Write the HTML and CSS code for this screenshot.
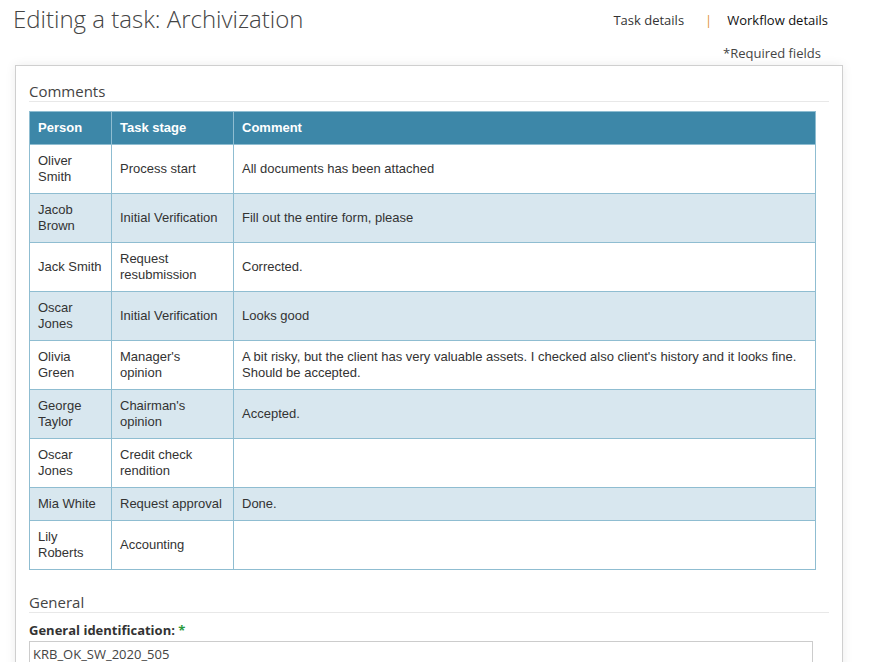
FILE: index.html
```html
<!DOCTYPE html>
<html>
<head>
<meta charset="utf-8">
<link rel="stylesheet" href="styles.css">
</head>
<body>
<header class="top">
  <h1 class="title">Editing a task: Archivization</h1>
  <nav class="tabs">
    <a class="tab">Task details</a>
    <span class="sep">|</span>
    <a class="tab active">Workflow details</a>
  </nav>
</header>
<div class="required">*Required fields</div>
<main class="panel">
  <section class="section">
    <h2 class="section-title">Comments</h2>
    <table class="grid">
      <colgroup>
        <col class="c1"><col class="c2"><col>
      </colgroup>
      <thead>
        <tr><th>Person</th><th>Task stage</th><th>Comment</th></tr>
      </thead>
      <tbody>
        <tr><td>Oliver Smith</td><td>Process start</td><td>All documents has been attached</td></tr>
        <tr><td>Jacob Brown</td><td>Initial Verification</td><td>Fill out the entire form, please</td></tr>
        <tr><td>Jack Smith</td><td>Request resubmission</td><td>Corrected.</td></tr>
        <tr><td>Oscar Jones</td><td>Initial Verification</td><td>Looks good</td></tr>
        <tr><td>Olivia Green</td><td>Manager's opinion</td><td>A bit risky, but the client has very valuable assets. I checked also client's history and it looks fine. Should be accepted.</td></tr>
        <tr><td>George Taylor</td><td>Chairman's opinion</td><td>Accepted.</td></tr>
        <tr><td>Oscar Jones</td><td>Credit check rendition</td><td></td></tr>
        <tr><td>Mia White</td><td>Request approval</td><td>Done.</td></tr>
        <tr><td>Lily Roberts</td><td>Accounting</td><td></td></tr>
      </tbody>
    </table>
  </section>
  <section class="section general">
    <h2 class="section-title">General</h2>
    <label class="label">General identification: <span class="star">*</span></label>
    <div class="input">KRB_OK_SW_2020_505</div>
  </section>
</main>
</body>
</html>
```

FILE: styles.css
```css
html, body {
  margin: 0;
  padding: 0;
  background: #fff;
}
body {
  font-family: "Open Sans", "Liberation Sans", sans-serif;
  color: #333;
  width: 882px;
  height: 662px;
  overflow: hidden;
}
.top {
  display: flex;
  justify-content: space-between;
  align-items: flex-start;
  padding: 0 54px 0 13px;
}
.title {
  margin: 2px 0 0;
  font-size: 24px;
  font-weight: 300;
  color: #444;
  line-height: 34px;
}
.tabs {
  display: flex;
  align-items: center;
  font-size: 13px;
  margin-top: 11px;
  line-height: 18px;
}
.tab {
  color: #333;
}
.tab.active {
  color: #111;
}
.sep {
  color: #e0913a;
  margin: 0 15px 0 21px;
}
.required {
  font-size: 13px;
  color: #444;
  text-align: right;
  padding-right: 61px;
  margin-top: 8px;
  line-height: 18px;
}
.panel {
  margin: 3px 39px 0 15px;
  border: 1px solid #cfcfcf;
  box-shadow: 0 0 10px rgba(0,0,0,0.08);
  padding: 15px 13px 20px;
  height: 700px;
}
.section-title {
  margin: 0;
  font-size: 15px;
  font-weight: 400;
  color: #444;
  line-height: 20px;
  padding-bottom: 0;
  border-bottom: 1px solid #e8e8e8;
}
.grid {
  margin-top: 9px;
  width: 787px;
  border-collapse: collapse;
  font-family: "Liberation Sans", Arial, sans-serif;
  font-size: 13px;
  line-height: 16px;
  color: #333;
}
.c1 { width: 82px; }
.c2 { width: 122px; }
.grid th, .grid td {
  border: 1px solid #8fbdd1;
  padding: 8px 8px;
  text-align: left;
  vertical-align: middle;
}
.grid th {
  background: #3d87a8;
  color: #fff;
  font-weight: 700;
}
.grid tbody tr:nth-child(even) td {
  background: #d8e7ef;
}
.general {
  margin-top: 22px;
}
.label {
  display: block;
  margin-top: 8px;
  font-size: 13px;
  font-weight: 700;
  color: #333;
  line-height: 18px;
}
.star {
  color: #2a9a3c;
}
.input {
  margin-top: 2px;
  width: 776px;
  border: 1px solid #ccc;
  padding: 3px 3px;
  font-size: 13px;
  color: #444;
  line-height: 18px;
  height: 24px;
}
```
